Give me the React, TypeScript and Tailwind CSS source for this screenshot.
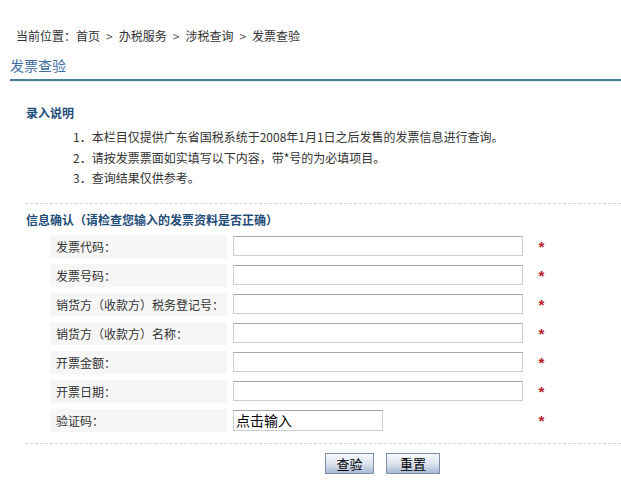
import React from "react";

const rows: { label: string; short?: boolean; value?: string }[] = [
  { label: "发票代码：" },
  { label: "发票号码：" },
  { label: "销货方（收款方）税务登记号：" },
  { label: "销货方（收款方）名称：" },
  { label: "开票金额：" },
  { label: "开票日期：" },
  { label: "验证码：", short: true, value: "点击输入" },
];

const crumbs = ["首页", "办税服务", "涉税查询", "发票查验"];

export default function App() {
  return (
    <div className="w-[621px] h-[493px] bg-white text-[12px] text-[#333333] font-['Noto_Sans_CJK_SC','Noto_Sans',sans-serif] overflow-hidden">
      <div className="pt-[28px] pl-[16px] leading-[16px] whitespace-nowrap flex">
        <span>当前位置：</span>
        {crumbs.map((c, i) => (
          <React.Fragment key={c}>
            {i > 0 && <span className="mx-[6px] text-[#555]">&gt;</span>}
            <span>{c}</span>
          </React.Fragment>
        ))}
      </div>
      <div className="mt-[11px] pl-[10px] text-[14px] leading-[20px] text-[#3e6ea3]">
        发票查验
      </div>
      <div className="ml-[10px] mt-[4px] h-[2px] bg-[#4a7f9b]" />
      <div className="h-[1px] ml-[10px] bg-[#e6f4f8]" />

      <div className="pl-[26px] mt-[23px]">
        <div className="font-bold text-[#1f4d7a] leading-[16px]">录入说明</div>
        <div className="ml-[47px] mt-[6px] leading-[20.5px]">
          <div>1．本栏目仅提供广东省国税系统于2008年1月1日之后发售的发票信息进行查询。</div>
          <div>2．请按发票票面如实填写以下内容，带*号的为必填项目。</div>
          <div>3．查询结果仅供参考。</div>
        </div>
      </div>

      <div className="ml-[25px] mt-[14px] border-t border-dashed border-[#d4d4d4]" />

      <div className="pl-[26px] mt-[8px] font-bold text-[#1f4d7a] leading-[16px]">
        信息确认（请检查您输入的发票资料是否正确）
      </div>

      <div className="mt-[7px] flex flex-col gap-[6px]">
        {rows.map((r) => (
          <div key={r.label} className="flex items-center h-[23px]">
            <div className="ml-[50px] w-[177px] h-[23px] bg-[#f6f6f6] pl-[6px] leading-[23px] whitespace-nowrap">
              {r.label}
            </div>
            <div className="w-[306px] pl-[6px] flex items-center">
              <div
                className={
                  (r.short ? "w-[150px] h-[21px] text-[14px] text-black pl-[2px]" : "w-[290px] h-[20px]") +
                  " border border-[#cfcfcf] border-t-[#a8a8a8] bg-white leading-[19px]"
                }
              >
                {r.value ?? ""}
              </div>
            </div>
            <div className="ml-[4px] pt-[7px] text-[#b8202a] text-[15px] font-bold leading-[16px] font-['Liberation_Mono',monospace]">*</div>
          </div>
        ))}
      </div>

      <div className="ml-[25px] mt-[11px] border-t border-dashed border-[#d4d4d4]" />

      <div className="mt-[9px] flex gap-[12px] pl-[325px]">
        <button className="w-[49px] h-[21px] border border-[#7d8fa8] bg-gradient-to-b from-[#f6f8fb] via-[#dde5f0] to-[#a9bad4] text-[13px] leading-[19px] text-black">
          查验
        </button>
        <button className="w-[54px] h-[21px] border border-[#7d8fa8] bg-gradient-to-b from-[#f6f8fb] via-[#dde5f0] to-[#a9bad4] text-[13px] leading-[19px] text-black">
          重置
        </button>
      </div>
    </div>
  );
}
